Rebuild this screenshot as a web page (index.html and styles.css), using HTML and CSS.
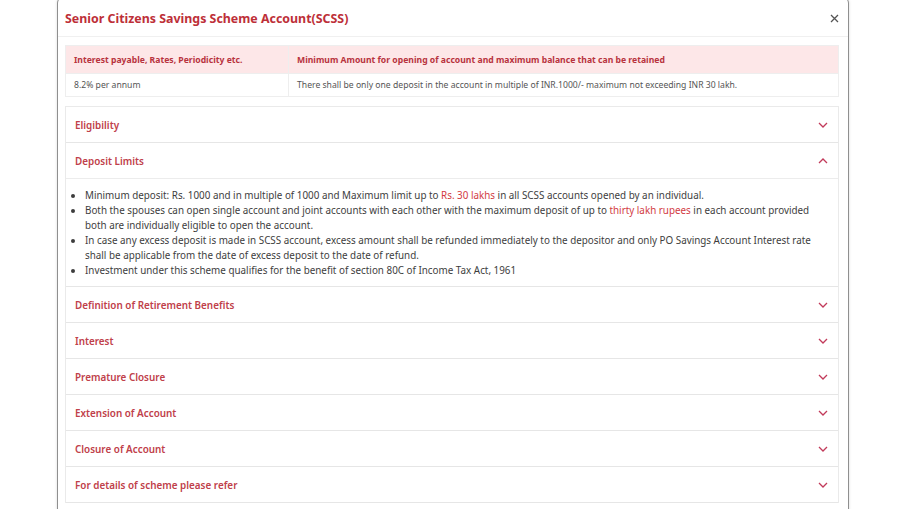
FILE: index.html
```html
<!DOCTYPE html>
<html lang="en">
<head>
  <meta charset="UTF-8" />
  <title>Senior Citizens Savings Scheme Account(SCSS)</title>
  <link rel="stylesheet" href="styles.css">
</head>
<body>

  <div class="modal">
    <div class="modal-header">
      <h2>Senior Citizens Savings Scheme Account(SCSS)</h2>
      <button class="close" aria-label="Close">
        <svg width="9" height="9" viewBox="0 0 9 9"><path d="M1 1L8 8M8 1L1 8" stroke="#555" stroke-width="1.3" fill="none"/></svg>
      </button>
    </div>

    <div class="modal-body">
      <table class="rates">
        <tr>
          <th class="col-rate">Interest payable, Rates, Periodicity etc.</th>
          <th>Minimum Amount for opening of account and maximum balance that can be retained</th>
        </tr>
        <tr>
          <td>8.2% per annum</td>
          <td>There shall be only one deposit in the account in multiple of INR.1000/- maximum not exceeding INR 30 lakh.</td>
        </tr>
      </table>

      <div class="accordion">
        <div class="acc-item">
          <div class="acc-head">Eligibility <svg class="chev" width="10" height="6" viewBox="0 0 10 6"><path d="M1 1L5 5L9 1" /></svg></div>
        </div>
        <div class="acc-item open">
          <div class="acc-head">Deposit Limits <svg class="chev" width="10" height="6" viewBox="0 0 10 6"><path d="M1 5L5 1L9 5" /></svg></div>
          <div class="acc-body">
            <ul>
              <li>Minimum deposit: Rs. 1000 and in multiple of 1000 and Maximum limit up to <span class="hl">Rs. 30 lakhs</span> in all SCSS accounts opened by an individual.</li>
              <li>Both the spouses can open single account and joint accounts with each other with the maximum deposit of up to <span class="hl">thirty lakh rupees</span> in each account provided both are individually eligible to open the account.</li>
              <li>In case any excess deposit is made in SCSS account, excess amount shall be refunded immediately to the depositor and only PO Savings Account Interest rate shall be applicable from the date of excess deposit to the date of refund.</li>
              <li>Investment under this scheme qualifies for the benefit of section 80C of Income Tax Act, 1961</li>
            </ul>
          </div>
        </div>
        <div class="acc-item">
          <div class="acc-head">Definition of Retirement Benefits <svg class="chev" width="10" height="6" viewBox="0 0 10 6"><path d="M1 1L5 5L9 1" /></svg></div>
        </div>
        <div class="acc-item">
          <div class="acc-head">Interest <svg class="chev" width="10" height="6" viewBox="0 0 10 6"><path d="M1 1L5 5L9 1" /></svg></div>
        </div>
        <div class="acc-item">
          <div class="acc-head">Premature Closure <svg class="chev" width="10" height="6" viewBox="0 0 10 6"><path d="M1 1L5 5L9 1" /></svg></div>
        </div>
        <div class="acc-item">
          <div class="acc-head">Extension of Account <svg class="chev" width="10" height="6" viewBox="0 0 10 6"><path d="M1 1L5 5L9 1" /></svg></div>
        </div>
        <div class="acc-item">
          <div class="acc-head">Closure of Account <svg class="chev" width="10" height="6" viewBox="0 0 10 6"><path d="M1 1L5 5L9 1" /></svg></div>
        </div>
        <div class="acc-item">
          <div class="acc-head">For details of scheme please refer <svg class="chev" width="10" height="6" viewBox="0 0 10 6"><path d="M1 1L5 5L9 1" /></svg></div>
        </div>
      </div>
    </div>
  </div>

</body>
</html>
```

FILE: styles.css
```css
body {
  margin: 0;
  font-family: 'Noto Sans', 'Open Sans', sans-serif;
  background: #ffffff;
  height: 509px;
  overflow: hidden;
}

.modal {
  width: 790px;
  margin: -3px 0 0 57px;
  padding-top: 3px;
  border: 1px solid #8f8f8f;
  border-radius: 6px;
  background: #ffffff;
  box-shadow: 0 0 3px rgba(0, 0, 0, 0.15);
}

.modal-header {
  display: flex;
  align-items: center;
  justify-content: space-between;
  height: 35px;
  padding: 0 7px 0 7px;
  border-bottom: 1px solid #f0f0f0;
}

h2 {
  margin: 0;
  font-size: 12.4px;
  font-weight: 700;
  color: #bd2f38;
}

.close {
  border: none;
  background: none;
  padding: 0;
  width: 14px;
  height: 14px;
  display: flex;
  align-items: center;
  justify-content: center;
  cursor: pointer;
}

.modal-body {
  padding: 8px 8px 12px 7px;
}

.rates {
  width: 774px;
  border-collapse: collapse;
  border: 1px solid #eeeeee;
  font-size: 8.65px;
}

.rates th {
  background: #fde7e8;
  color: #b8333e;
  font-weight: 700;
  text-align: left;
  height: 27px;
  padding: 0 8px;
}

.rates td {
  color: #555555;
  height: 22px;
  padding: 0 8px;
}

.rates th + th,
.rates td + td {
  border-left: 1px solid #eeeeee;
}

.rates tr + tr td {
  border-top: 1px solid #eeeeee;
}

.col-rate {
  width: 206px;
}

.accordion {
  margin-top: 9px;
  width: 772px;
  border: 1px solid #eaeaea;
  border-bottom: none;
}

.acc-item {
  border-bottom: 1px solid #e6e6e6;
}

.acc-head {
  display: flex;
  align-items: center;
  justify-content: space-between;
  height: 35px;
  padding: 0 10px 0 9px;
  font-size: 9.9px;
  font-weight: 600;
  color: #c0404a;
}

.open .acc-head {
  border-bottom: 1px solid #ececec;
}

.chev path {
  fill: none;
  stroke: #c23a5a;
  stroke-width: 1.3;
}

.acc-body {
  padding: 9px 9px 8px 9px;
}

.acc-body ul {
  margin: 0;
  padding-left: 10px;
  font-size: 9.85px;
  line-height: 15px;
  color: #3d3d3d;
}

.hl {
  color: #d23a3f;
}
```
